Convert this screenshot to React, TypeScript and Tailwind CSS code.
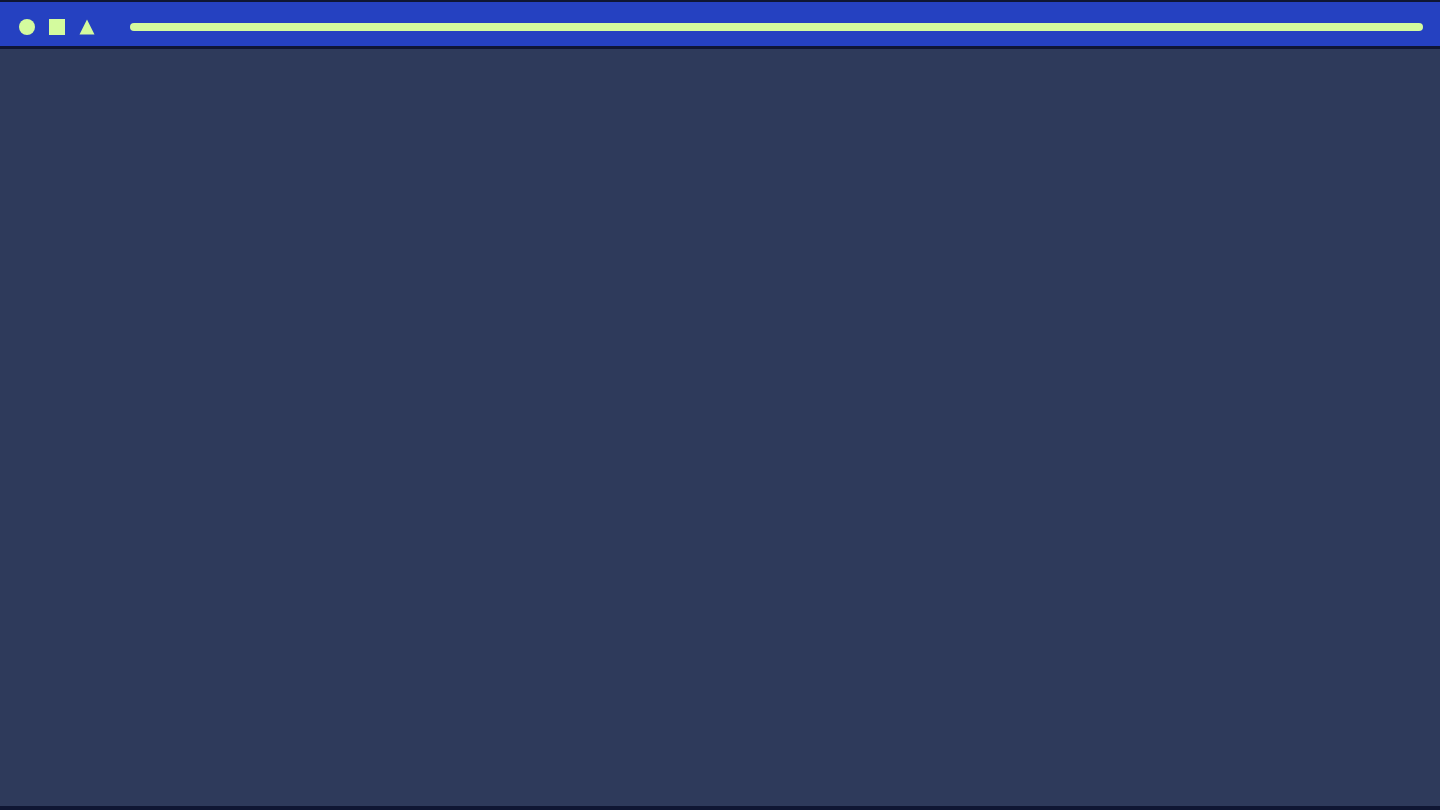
export default function App() {
  return (
    <div className="flex h-[810px] w-full flex-col bg-[#0f1633] pt-[2px] pb-[4px]">
      {/* title bar */}
      <div className="flex h-[44px] items-start bg-[#2541c1] pt-[17px] pl-[19px] pr-[17px]">
        <div className="flex items-center gap-[14px]">
          <span className="block h-4 w-4 rounded-full bg-[#d4fb9e]" />
          <span className="block h-4 w-4 bg-[#d4fb9e]" />
          <svg width="16" height="16" viewBox="0 0 16 16" className="block">
            <polygon points="8,0.5 15.5,15.5 0.5,15.5" fill="#d4fb9e" />
          </svg>
        </div>
        <div className="ml-[35px] mt-[4px] h-2 flex-1 rounded-full bg-[#d4fb9e]" />
      </div>
      <div className="mt-[3px] flex-1 bg-[#2e3a5b]" />
    </div>
  );
}
